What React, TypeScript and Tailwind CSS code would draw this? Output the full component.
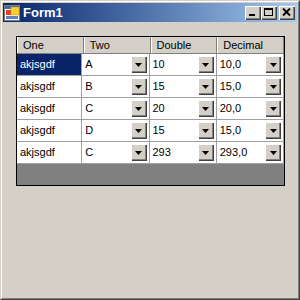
import React from 'react';

const FONT = { fontFamily: '"Liberation Sans", Arial, sans-serif' };

const rows = [
  { one: 'akjsgdf', two: 'A', dbl: '10', dec: '10,0' },
  { one: 'akjsgdf', two: 'B', dbl: '15', dec: '15,0' },
  { one: 'akjsgdf', two: 'C', dbl: '20', dec: '20,0' },
  { one: 'akjsgdf', two: 'D', dbl: '15', dec: '15,0' },
  { one: 'akjsgdf', two: 'C', dbl: '293', dec: '293,0' },
];

const raised =
  'bg-[#d4d0c8] shadow-[inset_1px_1px_0_#ffffff,inset_-1px_-1px_0_#404040,inset_-2px_-2px_0_#808080]';

const FormIcon = () => (
  <svg width="16" height="16" viewBox="0 0 16 16" className="shrink-0">
    <rect x="0.5" y="0.5" width="15" height="15" fill="#ffffff" stroke="#808080" />
    <rect x="1" y="1" width="14" height="3" fill="#3a6ea5" />
    <rect x="2" y="5" width="5" height="5" fill="#e04020" />
    <rect x="7" y="2" width="8" height="8" fill="#f8d030" stroke="#c09000" strokeWidth="0.5" />
    <rect x="2" y="11" width="12" height="3" fill="#6080c0" />
  </svg>
);

const TitleButton = ({ kind }: { kind: 'min' | 'max' | 'close' }) => (
  <div className={`w-[16px] h-[14px] flex items-center justify-center ${raised}`}>
    <svg width="10" height="9" viewBox="0 0 10 9">
      {kind === 'min' && <rect x="1" y="6" width="6" height="2" fill="#000" />}
      {kind === 'max' && (
        <>
          <rect x="0.5" y="0.5" width="8" height="7" fill="none" stroke="#000" />
          <rect x="0" y="0" width="9" height="2" fill="#000" />
        </>
      )}
      {kind === 'close' && (
        <path d="M1 0.5 L8 7.5 M8 0.5 L1 7.5" stroke="#000" strokeWidth="1.8" />
      )}
    </svg>
  </div>
);

const DropButton = () => (
  <div className={`w-[16px] h-[17px] flex items-center justify-center shrink-0 ${raised}`}>
    <svg width="7" height="4" viewBox="0 0 7 4">
      <path d="M0 0 H7 L3.5 4 Z" fill="#000" />
    </svg>
  </div>
);

const TextCell = ({ value, selected }: { value: string; selected?: boolean }) => (
  <div
    className={`w-[66px] h-[21px] flex items-center pl-[3px] text-[11px] border-r border-[#a0a0a0] box-content ${
      selected ? 'bg-[#0a246a] text-white' : 'bg-white text-black'
    }`}
  >
    {value}
  </div>
);

const ComboCell = ({ value }: { value: string }) => (
  <div className="w-[66px] h-[21px] flex items-center justify-between pl-[3px] pr-[2px] bg-white text-[11px] text-black border-r border-[#a0a0a0] box-content">
    <span>{value}</span>
    <DropButton />
  </div>
);

const HeaderCell = ({ label }: { label: string }) => (
  <div className="w-[66px] h-[16px] flex items-center pl-[6px] text-[11px] text-black border-r border-[#808080] box-content shadow-[inset_1px_0_0_#ffffff]">
    {label}
  </div>
);

export default function App() {
  return (
    <div
      className="w-[300px] h-[300px] bg-[#d4d0c8] border border-t-[#d4d0c8] border-l-[#d4d0c8] border-r-[#404040] border-b-[#404040]"
      style={FONT}
    >
      <div className="w-full h-full border border-t-white border-l-white border-r-[#808080] border-b-[#808080] p-px flex flex-col">
        <div className="h-[19px] flex items-center pl-[1px] pr-[2px] bg-gradient-to-r from-[#0a246a] to-[#a6caf0]">
          <FormIcon />
          <span className="ml-[3px] text-[13px] font-bold text-white">Form1</span>
          <div className="ml-auto flex">
            <TitleButton kind="min" />
            <TitleButton kind="max" />
            <div className="w-[2px]" />
            <TitleButton kind="close" />
          </div>
        </div>

        <div className="mt-[14px] ml-[13px] w-[269px] border border-black bg-[#808080]">
          <div className="flex bg-[#d4d0c8] border-b border-[#808080]">
            <HeaderCell label="One" />
            <HeaderCell label="Two" />
            <HeaderCell label="Double" />
            <HeaderCell label="Decimal" />
          </div>
          {rows.map((r, i) => (
            <div key={i} className="flex border-b border-[#a0a0a0]">
              <TextCell value={r.one} selected={i === 0} />
              <ComboCell value={r.two} />
              <ComboCell value={r.dbl} />
              <ComboCell value={r.dec} />
            </div>
          ))}
          <div className="h-[21px]" />
        </div>
      </div>
    </div>
  );
}
